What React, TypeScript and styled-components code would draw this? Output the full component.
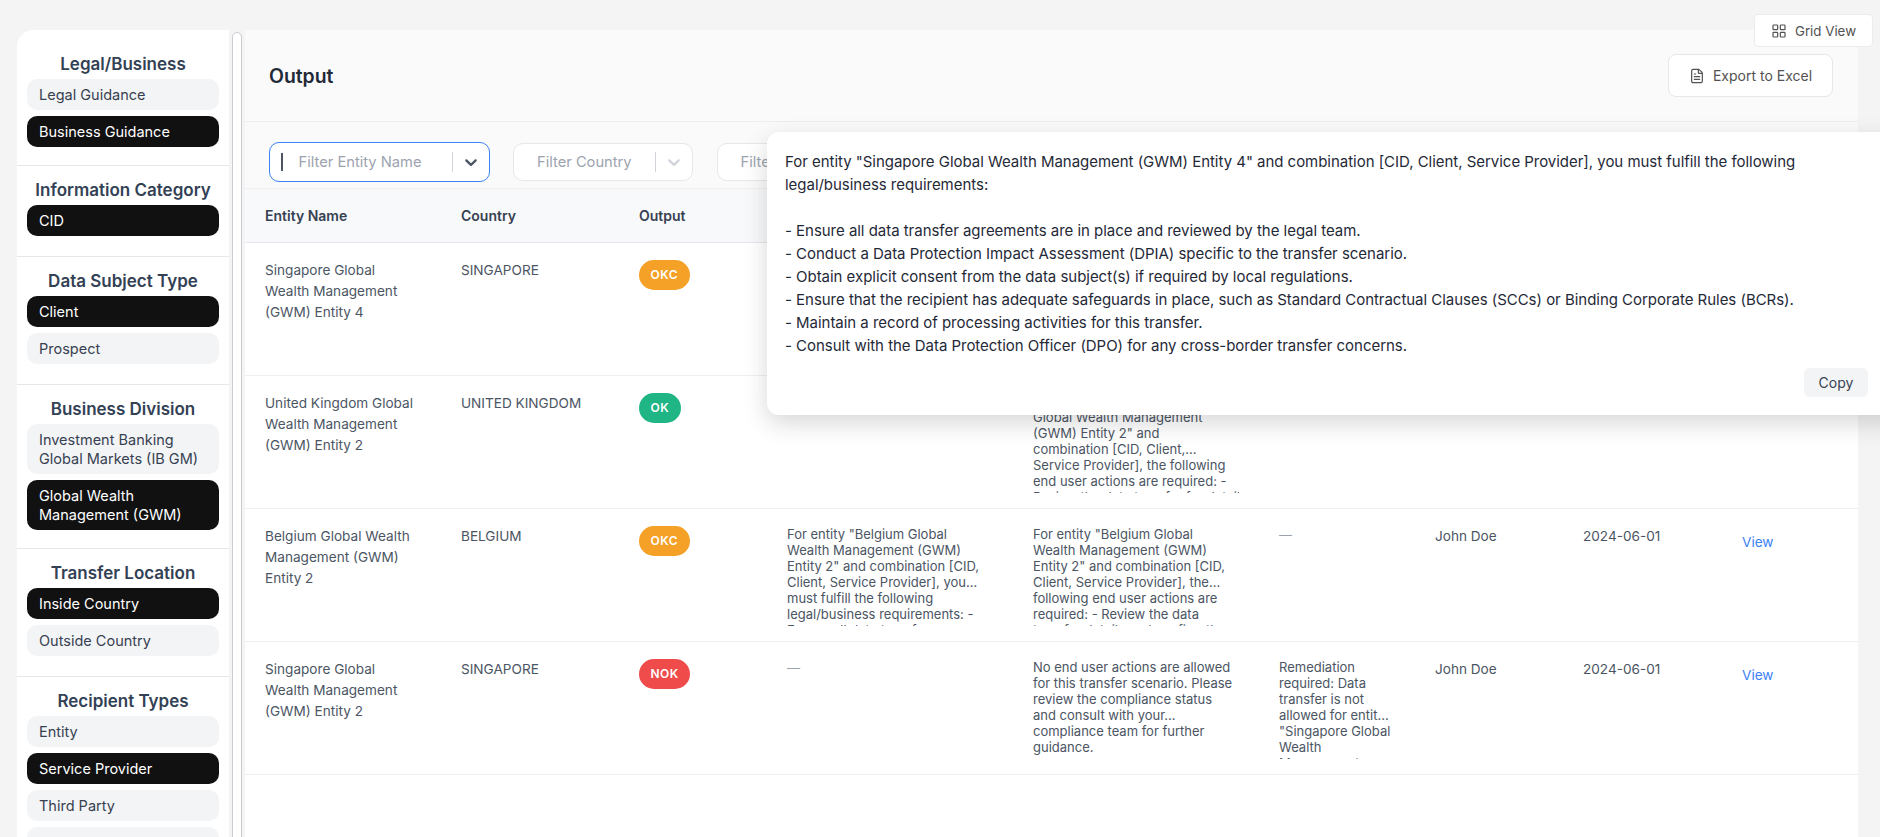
import React from 'react';
import styled, { createGlobalStyle } from 'styled-components';
import { FileText, LayoutGrid } from 'lucide-react';

const GlobalStyle = createGlobalStyle`
  html, body {
    margin: 0;
    height: 100%;
    overflow: hidden;
    background: #f4f4f5;
    font-family: Inter, "Liberation Sans", sans-serif;
  }
  * { box-sizing: border-box; }
`;

type Chip = { label: string; active?: boolean };
type Group = { title: string; chips: Chip[] };

const GROUPS: Group[] = [
  { title: 'Legal/Business', chips: [{ label: 'Legal Guidance' }, { label: 'Business Guidance', active: true }] },
  { title: 'Information Category', chips: [{ label: 'CID', active: true }] },
  { title: 'Data Subject Type', chips: [{ label: 'Client', active: true }, { label: 'Prospect' }] },
  {
    title: 'Business Division',
    chips: [{ label: 'Investment Banking Global Markets (IB GM)' }, { label: 'Global Wealth Management (GWM)', active: true }],
  },
  { title: 'Transfer Location', chips: [{ label: 'Inside Country', active: true }, { label: 'Outside Country' }] },
  {
    title: 'Recipient Types',
    chips: [{ label: 'Entity' }, { label: 'Service Provider', active: true }, { label: 'Third Party' }, { label: 'Regional Authority' }],
  },
];

const COLUMNS = [
  { title: 'Entity Name', width: 196 },
  { title: 'Country', width: 178 },
  { title: 'Output', width: 148 },
  { title: 'Legal Requirements', width: 246 },
  { title: 'End User Actions', width: 246 },
  { title: 'Remediation', width: 156 },
  { title: 'Created By', width: 148 },
  { title: 'Date', width: 159 },
  { title: 'Details', width: 136 },
];

type Row = {
  entity: string;
  country: string;
  status: 'OKC' | 'OK' | 'NOK';
  legal?: string[];
  actions?: string[];
  remediation?: string[];
};

const ROWS: Row[] = [
  {
    entity: 'Singapore Global Wealth Management (GWM) Entity 4',
    country: 'SINGAPORE',
    status: 'OKC',
    legal: ['For entity "Singapore Global', 'Wealth Management (GWM)', 'Entity 4" and combination [CID,'],
    actions: ['For entity "Singapore Global', 'Wealth Management (GWM)', 'Entity 4" and combination [CID,'],
  },
  {
    entity: 'United Kingdom Global Wealth Management (GWM) Entity 2',
    country: 'UNITED KINGDOM',
    status: 'OK',
    actions: [
      'For entity "United Kingdom',
      'Global Wealth Management',
      '(GWM) Entity 2" and',
      'combination [CID, Client,...',
      'Service Provider], the following',
      'end user actions are required: -',
      'Review the data transfer for details',
    ],
  },
  {
    entity: 'Belgium Global Wealth Management (GWM) Entity 2',
    country: 'BELGIUM',
    status: 'OKC',
    legal: [
      'For entity "Belgium Global',
      'Wealth Management (GWM)',
      'Entity 2" and combination [CID,',
      'Client, Service Provider], you...',
      'must fulfill the following',
      'legal/business requirements: -',
      'Ensure all data transfer agreements',
    ],
    actions: [
      'For entity "Belgium Global',
      'Wealth Management (GWM)',
      'Entity 2" and combination [CID,',
      'Client, Service Provider], the...',
      'following end user actions are',
      'required: - Review the data',
      'transfer details and confirm the',
    ],
  },
  {
    entity: 'Singapore Global Wealth Management (GWM) Entity 2',
    country: 'SINGAPORE',
    status: 'NOK',
    actions: [
      'No end user actions are allowed',
      'for this transfer scenario. Please',
      'review the compliance status',
      'and consult with your...',
      'compliance team for further',
      'guidance.',
    ],
    remediation: [
      'Remediation',
      'required: Data',
      'transfer is not',
      'allowed for entit...',
      '"Singapore Global',
      'Wealth',
      'Management',
    ],
  },
];

const POPUP_LINES = [
  'For entity "Singapore Global Wealth Management (GWM) Entity 4" and combination [CID, Client, Service Provider], you must fulfill the following',
  'legal/business requirements:',
  '',
  '- Ensure all data transfer agreements are in place and reviewed by the legal team.',
  '- Conduct a Data Protection Impact Assessment (DPIA) specific to the transfer scenario.',
  '- Obtain explicit consent from the data subject(s) if required by local regulations.',
  '- Ensure that the recipient has adequate safeguards in place, such as Standard Contractual Clauses (SCCs) or Binding Corporate Rules (BCRs).',
  '- Maintain a record of processing activities for this transfer.',
  '- Consult with the Data Protection Officer (DPO) for any cross-border transfer concerns.',
];

const Chevron = ({ color }: { color: string }) => (
  <svg width="20" height="20" viewBox="0 0 20 20" fill={color}>
    <path d="M4.516 7.548c0.436-0.446 1.043-0.481 1.576 0l3.908 3.747 3.908-3.747c0.533-0.481 1.141-0.446 1.574 0 0.436 0.445 0.408 1.197 0 1.615-0.406 0.418-4.695 4.502-4.695 4.502-0.217 0.223-0.502 0.335-0.787 0.335s-0.57-0.112-0.789-0.335c0 0-4.287-4.084-4.695-4.502s-0.436-1.17 0-1.615z" />
  </svg>
);

const TextLines = ({ lines }: { lines?: string[] }) =>
  lines ? (
    <Clamp>
      {lines.map((line) => (
        <span key={line}>{line}</span>
      ))}
    </Clamp>
  ) : (
    <Dash>—</Dash>
  );

const App = () => (
  <>
    <GlobalStyle />
    <Page>
      <GridToggle>
        <LayoutGrid size={16} strokeWidth={1.8} />
        Grid View
      </GridToggle>
      <Sidebar>
        {GROUPS.map((group) => (
          <Section key={group.title}>
            <SectionTitle>{group.title}</SectionTitle>
            {group.chips.map((chip) => (
              <ChipButton key={chip.label} $active={chip.active}>
                {chip.label}
              </ChipButton>
            ))}
          </Section>
        ))}
      </Sidebar>
      <ScrollThumb />
      <Main>
        <Header>
          <Title>Output</Title>
          <ExportButton>
            <FileText size={16} strokeWidth={1.8} />
            Export to Excel
          </ExportButton>
        </Header>
        <Filters>
          <Select $focused $width={221}>
            <Caret />
            <Placeholder>Filter Entity Name</Placeholder>
            <Divider />
            <Chevron color="#4b5563" />
          </Select>
          <Select $width={180}>
            <Placeholder>Filter Country</Placeholder>
            <Divider />
            <Chevron color="#d1d5db" />
          </Select>
          <Select $width={180}>
            <Placeholder>Filter Output</Placeholder>
            <Divider />
            <Chevron color="#d1d5db" />
          </Select>
        </Filters>
        <Table>
          <colgroup>
            {COLUMNS.map((column) => (
              <col key={column.title} width={column.width} />
            ))}
          </colgroup>
          <thead>
            <tr>
              {COLUMNS.map((column) => (
                <Th key={column.title}>{column.title}</Th>
              ))}
            </tr>
          </thead>
          <tbody>
            {ROWS.map((row) => (
              <tr key={row.entity}>
                <Td>{row.entity}</Td>
                <Td>{row.country}</Td>
                <Td>
                  <Badge $status={row.status}>{row.status}</Badge>
                </Td>
                <SmallTd>
                  <TextLines lines={row.legal} />
                </SmallTd>
                <SmallTd>
                  <TextLines lines={row.actions} />
                </SmallTd>
                <SmallTd>
                  <TextLines lines={row.remediation} />
                </SmallTd>
                <Td>John Doe</Td>
                <Td>2024-06-01</Td>
                <Td>
                  <ViewLink>View</ViewLink>
                </Td>
              </tr>
            ))}
          </tbody>
        </Table>
      </Main>
      <Popup>
        <PopupText>
          {POPUP_LINES.map((line, i) => (
            <PopupLine key={i}>{line}</PopupLine>
          ))}
        </PopupText>
        <CopyButton>Copy</CopyButton>
      </Popup>
    </Page>
  </>
);

const Page = styled.div`
  position: relative;
  display: flex;
  align-items: flex-start;
  width: 1880px;
  height: 837px;
  padding: 30px 22px 0 17px;
  overflow: hidden;
`;

const GridToggle = styled.button`
  position: absolute;
  z-index: 3;
  top: 14px;
  left: 1754px;
  width: 119px;
  height: 33px;
  display: flex;
  align-items: center;
  justify-content: center;
  gap: 8px;
  background: #fff;
  border: 1px solid #ececee;
  border-radius: 4px;
  color: #525252;
  font: 400 13.3px Inter, sans-serif;
`;

const Sidebar = styled.aside`
  flex: 0 0 212px;
  height: 807px;
  overflow: hidden;
  background: #fff;
  border-top-left-radius: 16px;
`;

const Section = styled.section`
  display: flex;
  flex-direction: column;
  gap: 6px;
  padding: 12px 10px 20px;
  border-bottom: 1px solid #e5e7eb;

  &:first-child {
    padding-top: 22px;
    padding-bottom: 18px;
  }

  &:nth-child(4) {
    padding-bottom: 18px;
  }
`;

const SectionTitle = styled.h3`
  margin: 0 0 -3px;
  font-size: 17px;
  line-height: 24px;
  font-weight: 600;
  color: #334155;
  text-align: center;
  white-space: nowrap;
`;

const ChipButton = styled.div<{ $active?: boolean }>`
  padding: 6px 12px;
  border-radius: 10px;
  font-size: 14.5px;
  line-height: 19px;
  background: ${(p) => (p.$active ? '#111111' : '#f3f4f6')};
  color: ${(p) => (p.$active ? '#ffffff' : '#374151')};
`;

const ScrollThumb = styled.div`
  flex: 0 0 10px;
  height: 810px;
  margin: 2px 3px 0;
  background: #fff;
  border: 1px solid #c9ccd1;
  border-radius: 5px;
`;

const Main = styled.main`
  flex: 1;
  min-width: 0;
  height: 807px;
  background: #fff;
`;

const Header = styled.header`
  display: flex;
  align-items: center;
  justify-content: space-between;
  height: 92px;
  padding: 1px 25px 0 24px;
  background: #fafafa;
  border-bottom: 1px solid #eeeeef;
`;

const Title = styled.h2`
  margin: 0;
  font-size: 19.4px;
  font-weight: 600;
  color: #1f2937;
`;

const ExportButton = styled.button`
  width: 165px;
  height: 43px;
  margin-top: -1px;
  display: flex;
  align-items: center;
  justify-content: center;
  gap: 8px;
  background: #fff;
  border: 1px solid #e5e7eb;
  border-radius: 8px;
  color: #525252;
  font: 400 14px Inter, sans-serif;
`;

const Filters = styled.div`
  display: flex;
  align-items: center;
  gap: 23.5px;
  height: 67px;
  padding: 14px 0 0 23.5px;
  background: #fafafa;
  border-bottom: 1px solid #eeeeef;
`;

const Select = styled.div<{ $focused?: boolean; $width: number }>`
  display: flex;
  align-items: center;
  width: ${(p) => p.$width}px;
  height: ${(p) => (p.$focused ? 40 : 38)}px;
  padding: 0 8px 0 ${(p) => (p.$focused ? 11 : 23)}px;
  background: #fff;
  border: ${(p) => (p.$focused ? '1.5px solid #3b82f6' : '1px solid #e5e7eb')};
  border-radius: 10px;
`;

const Caret = styled.span`
  width: 2px;
  height: 18px;
  margin-right: 16px;
  background: #4b5563;
`;

const Placeholder = styled.span`
  flex: 1;
  font-size: 14.7px;
  color: #9ca3af;
  white-space: nowrap;
`;

const Divider = styled.span`
  width: 1px;
  height: 20px;
  margin-right: 8px;
  background: #d1d5db;
`;

const Table = styled.table`
  width: 1613px;
  table-layout: fixed;
  border-collapse: collapse;
`;

const Th = styled.th`
  height: 53px;
  padding: 0 20px;
  background: #f8f9fb;
  border-bottom: 1px solid #e5e7eb;
  font-size: 14px;
  font-weight: 600;
  color: #374151;
  text-align: left;
  white-space: nowrap;
  overflow: hidden;
`;

const Td = styled.td`
  height: 133px;
  padding: 17px 20px 0;
  border-bottom: 1px solid #eeeff1;
  font-size: 13.6px;
  line-height: 21px;
  color: #4b5563;
  vertical-align: top;
`;

const SmallTd = styled(Td)`
  font-size: 13px;
`;

const Clamp = styled.div`
  max-height: 100px;
  overflow: hidden;
  line-height: 16px;

  span {
    display: block;
    white-space: nowrap;
  }
`;

const Dash = styled.span`
  display: block;
  margin-top: -1px;
  color: #9ca3af;
`;

const BADGE_COLORS = { OKC: '#f5a027', OK: '#1fb584', NOK: '#ef4b4b' };

const Badge = styled.span<{ $status: Row['status'] }>`
  display: inline-flex;
  align-items: center;
  height: 30px;
  padding: 0 11.5px;
  border-radius: 15px;
  background: ${(p) => BADGE_COLORS[p.$status]};
  color: #fff;
  font-size: 12px;
  font-weight: 600;
  letter-spacing: 0.5px;
`;

const ViewLink = styled.span`
  display: block;
  margin-top: 6px;
  color: #3b82f6;
`;

const Popup = styled.div`
  position: absolute;
  z-index: 2;
  top: 132px;
  left: 767px;
  width: 1200px;
  height: 283px;
  padding: 18px;
  background: #fff;
  border-radius: 12px;
  box-shadow: 0 8px 24px rgba(0, 0, 0, 0.16);
`;

const PopupText = styled.div`
  font-size: 15px;
  line-height: 23px;
  letter-spacing: -0.03px;
  color: #1f2937;
`;

const PopupLine = styled.div`
  min-height: 23px;
  white-space: nowrap;
`;

const CopyButton = styled.button`
  position: absolute;
  top: 236px;
  left: 1037px;
  width: 64px;
  height: 29px;
  background: #f3f4f6;
  border: 0;
  border-radius: 6px;
  color: #374151;
  font: 400 14px Inter, sans-serif;
`;

export default App;
